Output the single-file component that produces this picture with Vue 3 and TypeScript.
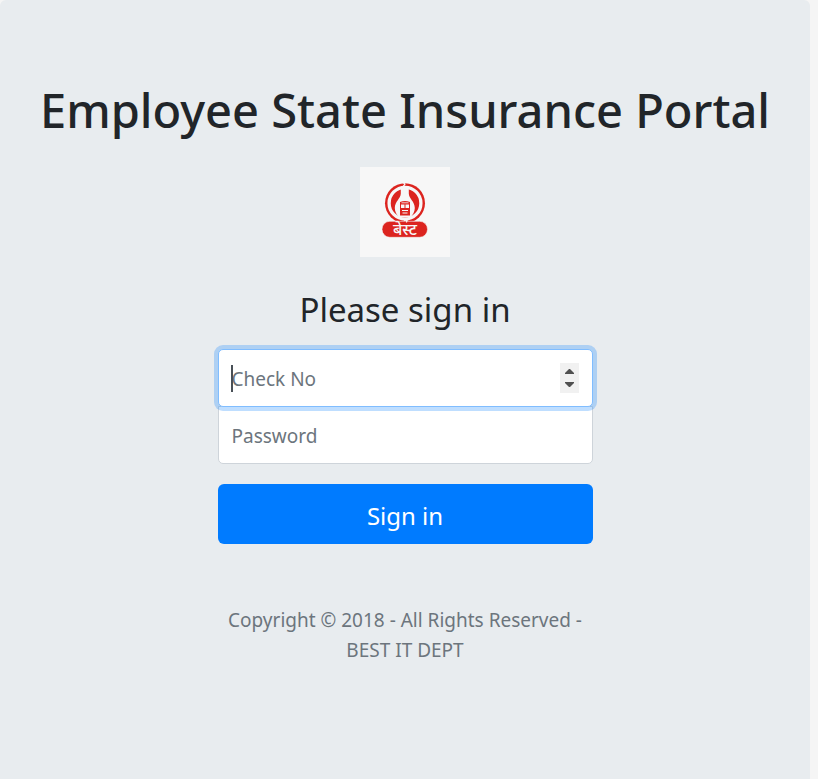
<script setup lang="ts">
import { onMounted, ref } from 'vue'

const checkNo = ref<number | string>('')
const password = ref('')
const checkInput = ref<HTMLInputElement | null>(null)
const year = 2018

function step(delta: number) {
  checkNo.value = Number(checkNo.value || 0) + delta
}

onMounted(() => checkInput.value?.focus())
</script>

<template>
  <main class="jumbotron">
    <h1 class="title">Employee State Insurance Portal</h1>
    <form class="form-signin" @submit.prevent>
      <svg class="logo" viewBox="0 0 90 90" role="img" aria-label="BEST logo">
        <rect width="90" height="90" fill="#f7f7f7" />
        <circle cx="45" cy="36.200" r="20" fill="#dc241f" />
        <circle cx="45" cy="36.200" r="15.900" fill="none" stroke="#f7f7f7" stroke-width="3.300" />
        <path d="M40.800 22h8v4.500c0 5 6 8 6 14.500 0 4-2 7-4.500 9.500h-11c-2.500-2.500-4.500-5.500-4.500-9.500 0-6.500 6-9.500 6-14.500z" fill="#f7f7f7" />
        <path d="M40 35q5-2 10 0v13.500H40z" fill="#dc241f" />
        <path d="M41.500 35.800h7" stroke="#f7f7f7" stroke-width=".8" />
        <path d="M41 37.500h3.500V41H41zM45.500 37.500H49V41h-3.500zM42 43h6v1h-6zM42.500 45.500h5v1h-5z" fill="#f7f7f7" />
        <path d="M43 15.500l2 1.500-1.500 2 3 1M44 53.500l3-.5-.5 3h2" fill="none" stroke="#f7f7f7" stroke-width="1.200" />
        <rect x="22" y="54.300" width="45.500" height="16" rx="7.800" fill="#dc241f" stroke="#f7f7f7" stroke-width=".6" />
        <path d="M44.500 53l2.500-.5-.5 3" fill="none" stroke="#f7f7f7" stroke-width="1.200" />
        <text class="logo-text" x="45" y="67.600" text-anchor="middle">बेस्ट</text>
      </svg>
      <h2 class="subtitle">Please sign in</h2>
      <div class="field field-first">
        <label for="check-no">
          <input id="check-no" ref="checkInput" v-model="checkNo" class="control" type="number" placeholder="Check No" aria-label="Check No" required />
        </label>
        <span v-if="checkNo === ''" class="caret" aria-hidden="true"></span>
        <div class="spinner">
          <button class="spin" type="button" tabindex="-1" aria-label="Increase" @click="step(1)">
            <svg viewBox="0 0 9 5" width="9" height="5"><path d="M0 5V4L4 0h1l4 4v1z" /></svg>
          </button>
          <button class="spin" type="button" tabindex="-1" aria-label="Decrease" @click="step(-1)">
            <svg viewBox="0 0 9 5" width="9" height="5"><path d="M0 0v1l4 4h1l4-4V0z" /></svg>
          </button>
        </div>
      </div>
      <div class="field field-last">
        <label for="password">
          <input id="password" v-model="password" class="control" type="password" placeholder="Password" aria-label="Password" required />
        </label>
      </div>
      <button class="submit" type="submit">Sign in</button>
      <p class="copyright">Copyright © {{ year }} - All Rights Reserved - BEST IT DEPT</p>
    </form>
  </main>
</template>

<style>
body {
  margin: 0;
  background: #f5f5f5;
}
</style>

<style scoped>
.jumbotron {
  box-sizing: border-box;
  min-height: 100vh;
  margin-right: 8px;
  padding: 80px 20px 40px;
  border-radius: 6px 6px 0 0;
  background: #e8ecef;
  color: #212529;
  font-family: "Segoe UI", "Noto Sans", "Open Sans", sans-serif;
  font-size: 19px;
  line-height: 30px;
  text-align: center;
}
.title {
  margin: 0 0 10px;
  font-size: 47px;
  font-weight: 500;
  line-height: 60px;
}
.form-signin {
  box-sizing: border-box;
  max-width: 413px;
  margin: 0 auto;
  padding: 17px 19px;
}
.logo {
  display: block;
  width: 90px;
  height: 90px;
  margin: 0 auto 32px;
}
.logo-text {
  fill: #f7f7f7;
  font-size: 16px;
  font-weight: 500;
}
.subtitle {
  margin: 0 0 18px;
  font-size: 33px;
  font-weight: 400;
  line-height: 42px;
}
.field {
  position: relative;
}
.field-last {
  margin: -1px 0 20px;
}
.control {
  display: block;
  box-sizing: border-box;
  width: 100%;
  height: 58px;
  padding: 14px 13px 12px;
  border: 1px solid #ced4da;
  border-radius: 5px;
  outline: 0;
  background: #fff;
  color: #495057;
  font: inherit;
  caret-color: transparent;
  appearance: textfield;
}
.field-last .control {
  border-top-left-radius: 0;
  border-top-right-radius: 0;
  caret-color: #495057;
}
.control::placeholder {
  color: #6c757d;
  opacity: 1;
}
.control:focus {
  position: relative;
  z-index: 2;
  border-color: #80bdff;
  box-shadow: 0 0 0 4px rgba(0, 123, 255, 0.25);
}
.control::-webkit-inner-spin-button {
  appearance: none;
  margin: 0;
}
.caret {
  position: absolute;
  z-index: 3;
  top: 16px;
  left: 13px;
  width: 2px;
  height: 27px;
  background: #495057;
  pointer-events: none;
}
.spinner {
  position: absolute;
  z-index: 3;
  top: 14px;
  right: 14px;
  display: grid;
  grid-template-rows: 1fr 1fr;
  width: 19px;
  height: 30px;
  background: #f1f1f1;
}
.spin {
  display: flex;
  align-items: flex-end;
  justify-content: center;
  padding: 0 0 4px;
  border: 0;
  background: transparent;
  fill: #505050;
}
.spin:last-child {
  align-items: flex-start;
  padding: 4px 0 0;
}
.submit {
  display: block;
  width: 100%;
  height: 60px;
  padding: 3px 0 0;
  border: 0;
  border-radius: 6px;
  background: #007bff;
  color: #fff;
  font: inherit;
  font-size: 24px;
  cursor: pointer;
}
.copyright {
  margin: 61px 0 0;
  color: #6c757d;
}
</style>
